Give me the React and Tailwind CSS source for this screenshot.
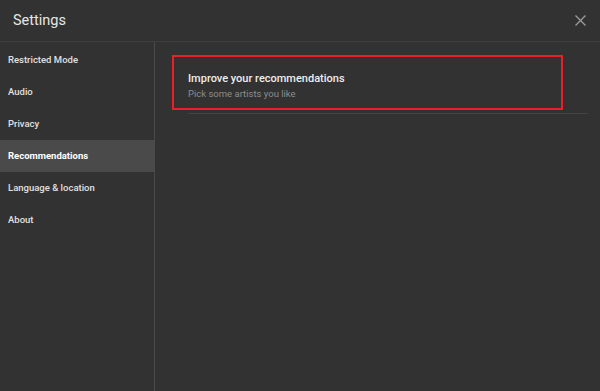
import React from 'react';

const items = ['Restricted Mode', 'Audio', 'Privacy', 'Recommendations', 'Language & location', 'About'];

const App = () => {
    return (
        <div className="w-[600px] h-[391px] bg-[#323232] flex flex-col overflow-hidden font-['Roboto',sans-serif]">
            <div className="h-[42px] shrink-0 flex items-center justify-between pl-[13px] pr-[14px] border-b border-[#3d3d3d]">
                <div className="text-[14.5px] text-[#e6e6e6]">Settings</div>
                <svg width="11" height="11" viewBox="0 0 11 11" className="text-[#9a9a9a]">
                    <path d="M0.5 0.5L10.5 10.5M10.5 0.5L0.5 10.5" stroke="currentColor" strokeWidth="1.4" />
                </svg>
            </div>
            <div className="flex flex-1">
                <div className="w-[155px] shrink-0 border-r border-[#4a4a4a] pt-[2px]">
                    {items.map((item) => (
                        <div
                            key={item}
                            className={
                                item === 'Recommendations'
                                    ? 'h-[32px] flex items-center pl-[8px] text-[9.5px] font-bold text-white bg-[#4a4a4a]'
                                    : 'h-[32px] flex items-center pl-[8px] text-[9.5px] font-medium text-[#e0e0e0]'
                            }
                        >
                            {item}
                        </div>
                    ))}
                </div>
                <div className="flex-1 pl-[33px] pr-[12px] pt-[30px]">
                    <div className="relative border-b border-[#444] pb-[13px]">
                        <div className="text-[11px] font-medium text-[#eeeeee] leading-[14px]">Improve your recommendations</div>
                        <div className="text-[9.5px] text-[#8c8c8c] leading-[12px] mt-[2px]">Pick some artists you like</div>
                        <div className="absolute left-[-16px] top-[-17px] w-[391px] h-[55px] border-[2px] border-[#e8202a]"></div>
                    </div>
                </div>
            </div>
        </div>
    );
};

export default App;
